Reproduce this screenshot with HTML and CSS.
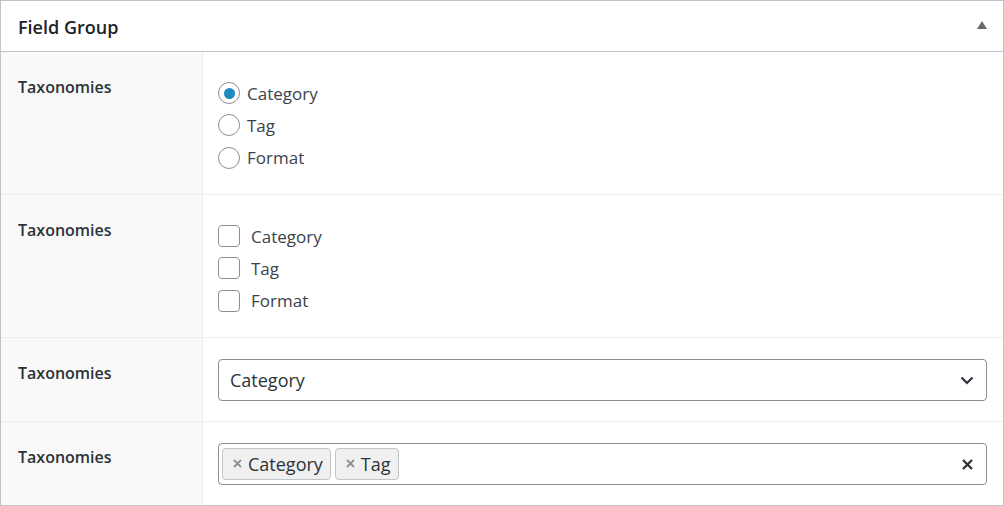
FILE: index.html
```html
<!DOCTYPE html>
<html>
<head>
<meta charset="utf-8">
<link rel="stylesheet" href="styles.css">
</head>
<body>
<div class="postbox">
  <div class="postbox-header">
    <h2 class="hndle">Field Group</h2>
    <span class="toggle"></span>
  </div>
  <div class="fields">
    <div class="field field-list">
      <div class="label">Taxonomies</div>
      <div class="input">
        <ul class="choice-list">
          <li><span class="radio checked"></span><span class="radio-text">Category</span></li>
          <li><span class="radio"></span><span class="radio-text">Tag</span></li>
          <li><span class="radio"></span><span class="radio-text">Format</span></li>
        </ul>
      </div>
    </div>
    <div class="field field-list">
      <div class="label">Taxonomies</div>
      <div class="input">
        <ul class="choice-list">
          <li><span class="checkbox"></span><span class="check-text">Category</span></li>
          <li><span class="checkbox"></span><span class="check-text">Tag</span></li>
          <li><span class="checkbox"></span><span class="check-text">Format</span></li>
        </ul>
      </div>
    </div>
    <div class="field field-select">
      <div class="label">Taxonomies</div>
      <div class="input">
        <div class="select">
          <span class="select-value">Category</span>
          <svg class="chevron" width="14" height="9" viewBox="0 0 14 9"><path d="M1.5 1.5 L7 7 L12.5 1.5" fill="none" stroke="#2c3338" stroke-width="2.2"/></svg>
        </div>
      </div>
    </div>
    <div class="field field-select last">
      <div class="label">Taxonomies</div>
      <div class="input">
        <div class="select multi">
          <div class="chips">
            <span class="chip"><svg class="chip-x" width="9" height="9" viewBox="0 0 9 9"><path d="M1 1 L8 8 M8 1 L1 8" fill="none" stroke="#8c8f94" stroke-width="1.8"/></svg>Category</span>
            <span class="chip"><svg class="chip-x" width="9" height="9" viewBox="0 0 9 9"><path d="M1 1 L8 8 M8 1 L1 8" fill="none" stroke="#8c8f94" stroke-width="1.8"/></svg>Tag</span>
          </div>
          <svg class="clear" width="11" height="11" viewBox="0 0 11 11"><path d="M1 1 L10 10 M10 1 L1 10" fill="none" stroke="#2c3338" stroke-width="2.3"/></svg>
        </div>
      </div>
    </div>
  </div>
</div>
</body>
</html>
```
FILE: styles.css
```css
* { box-sizing: border-box; }
html, body { margin: 0; padding: 0; background: #fff; }
body {
  font-family: "Open Sans", "Noto Sans", sans-serif;
  color: #3c434a;
  width: 1004px;
  height: 506px;
  overflow: hidden;
}
.postbox {
  border: 1px solid #c3c4c7;
  width: 1004px;
  height: 506px;
  background: #fff;
  display: flex;
  flex-direction: column;
}
.postbox-header {
  height: 51px;
  flex: none;
  border-bottom: 1px solid #c3c4c7;
  display: flex;
  align-items: center;
  justify-content: space-between;
  padding: 0 16px 0 17px;
}
.hndle {
  margin: 0;
  font-size: 18px;
  font-weight: 600;
  color: #1d2327;
  line-height: 24px;
  padding-top: 2px;
}
.toggle {
  width: 0;
  height: 0;
  border-left: 5px solid transparent;
  border-right: 5px solid transparent;
  border-bottom: 8px solid #646970;
  margin-top: -3px;
}
.fields { display: flex; flex-direction: column; flex: 1; }
.field {
  display: flex;
  flex: none;
  border-bottom: 1px solid #eeeeee;
}
.field.last { border-bottom: 0; flex: 1; }
.label {
  width: 202px;
  flex: none;
  background: #f9f9f9;
  border-right: 1px solid #eeeeee;
  padding: 24px 0 0 17px;
  font-size: 16px;
  font-weight: 600;
  line-height: 22px;
  color: #2c3338;
}
.input {
  flex: 1;
  padding: 20px 16px 20px 15px;
}
.field-select .input { padding: 21px 16px 20px 15px; }
.choice-list {
  list-style: none;
  margin: 0;
  padding: 5px 0 0 0;
}
.choice-list li {
  height: 32.333px;
  display: flex;
  align-items: center;
  font-size: 17px;
  color: #3c434a;
}
.radio {
  width: 22px;
  height: 22px;
  border-radius: 50%;
  border: 1px solid #8c8f94;
  background: #fff;
  display: inline-flex;
  align-items: center;
  justify-content: center;
  flex: none;
}
.radio.checked::before {
  content: "";
  width: 11px;
  height: 11px;
  border-radius: 50%;
  background: #1e8cbe;
}
.radio-text { margin-left: 7px; }
.checkbox {
  width: 22px;
  height: 22px;
  border-radius: 4px;
  border: 1px solid #8c8f94;
  background: #fff;
  flex: none;
}
.check-text { margin-left: 11px; }
.select {
  height: 42px;
  border: 1px solid #8c8f94;
  border-radius: 4px;
  display: flex;
  align-items: center;
  justify-content: space-between;
  padding: 0 12px 0 11px;
  font-size: 18px;
  color: #2c3338;
}
.chevron { margin-top: 1px; }
.select.multi { padding: 0 12px 0 3px; }
.chips { display: flex; gap: 4px; }
.chip {
  height: 32px;
  display: inline-flex;
  align-items: center;
  background: #f0f0f1;
  border: 1px solid #c3c4c7;
  border-radius: 4px;
  padding: 0 7px 0 10px;
  font-size: 18px;
  color: #2c3338;
}
.chip-x { margin-right: 6px; flex: none; }
.clear { margin-top: 1px; margin-right: 1px; }
```
